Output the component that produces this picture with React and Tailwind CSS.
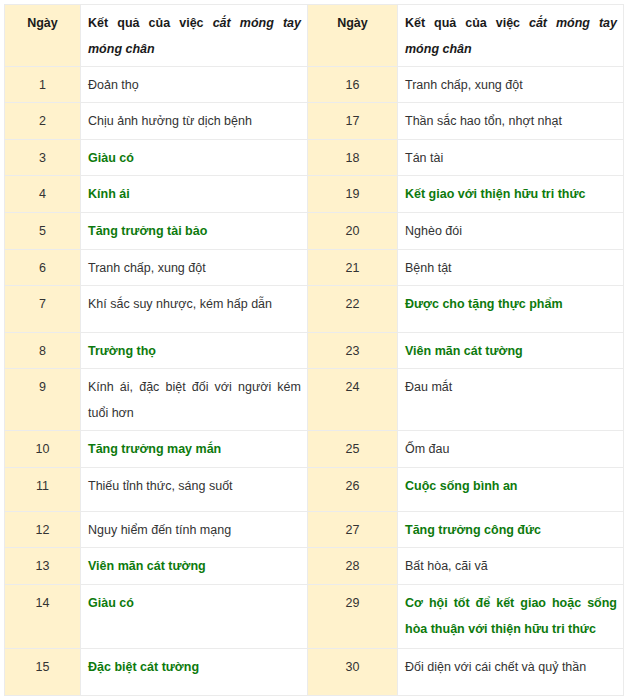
const rows = [
  { l: ['1', 'Đoản thọ', false], r: ['16', 'Tranh chấp, xung đột', false], h: 'h-[36px]' },
  { l: ['2', 'Chịu ảnh hưởng từ dịch bệnh', false], r: ['17', 'Thần sắc hao tổn, nhợt nhạt', false], h: 'h-[37px]' },
  { l: ['3', 'Giàu có', true], r: ['18', 'Tán tài', false], h: 'h-[36px]' },
  { l: ['4', 'Kính ái', true], r: ['19', 'Kết giao với thiện hữu tri thức', true], h: 'h-[37px]' },
  { l: ['5', 'Tăng trưởng tài bảo', true], r: ['20', 'Nghèo đói', false], h: 'h-[37px]' },
  { l: ['6', 'Tranh chấp, xung đột', false], r: ['21', 'Bệnh tật', false], h: 'h-[36px]' },
  { l: ['7', 'Khí sắc suy nhược, kém hấp dẫn', false], r: ['22', 'Được cho tặng thực phẩm', true], h: 'h-[47px]' },
  { l: ['8', 'Trường thọ', true], r: ['23', 'Viên mãn cát tường', true], h: 'h-[36px]' },
  { l: ['9', 'Kính ái, đặc biệt đối với người kém tuổi hơn', false], r: ['24', 'Đau mắt', false], h: 'h-[62px]' },
  { l: ['10', 'Tăng trưởng may mắn', true], r: ['25', 'Ốm đau', false], h: 'h-[37px]' },
  { l: ['11', 'Thiếu tỉnh thức, sáng suốt', false], r: ['26', 'Cuộc sống bình an', true], h: 'h-[44px]' },
  { l: ['12', 'Nguy hiểm đến tính mạng', false], r: ['27', 'Tăng trưởng công đức', true], h: 'h-[36px]' },
  { l: ['13', 'Viên mãn cát tường', true], r: ['28', 'Bất hòa, cãi vã', false], h: 'h-[37px]' },
  { l: ['14', 'Giàu có', true], r: ['29', 'Cơ hội tốt để kết giao hoặc sống hòa thuận với thiện hữu tri thức', true], h: 'h-[64px]' },
  { l: ['15', 'Đặc biệt cát tường', true], r: ['30', 'Đối diện với cái chết và quỷ thần', false], h: 'h-[47px]' },
];

const DayCell = ({ children }) => (
  <td className="bg-[#fff2cc] border border-[#ebebeb] text-center align-top px-2 pt-[5px] pb-[4px]">{children}</td>
);

const TextCell = ({ text, good }) => (
  <td className="bg-white border border-[#ebebeb] text-justify align-top pl-[7px] pr-[6px] pt-[5px] pb-[4px]">
    {good ? <strong className="font-bold text-[#0d7a0d]">{text}</strong> : text}
  </td>
);

const App = () => {
  return (
    <div className="bg-white pl-[4px] pt-[4px] w-[629px] h-[700px] overflow-hidden">
      <table
        className="table-fixed border-collapse w-[619px] text-[12.5px] leading-[26px] text-[#333333]"
        style={{ fontFamily: '"Liberation Sans", Arial, sans-serif' }}
      >
        <colgroup>
          <col className="w-[76px]" />
          <col className="w-[227px]" />
          <col className="w-[90px]" />
          <col className="w-[226px]" />
        </colgroup>
        <tbody>
          <tr className="h-[62px]">
            <td className="bg-[#fff2cc] border border-[#ebebeb] text-center align-top px-2 pt-[5px] pb-[4px] font-bold text-[#1a1a1a]">Ngày</td>
            <td className="bg-white border border-[#ebebeb] text-justify align-top pl-[7px] pr-[6px] pt-[5px] pb-[4px] font-bold text-[#1a1a1a]">
              Kết quả của việc <em>cắt móng tay móng chân</em>
            </td>
            <td className="bg-[#fff2cc] border border-[#ebebeb] text-center align-top px-2 pt-[5px] pb-[4px] font-bold text-[#1a1a1a]">Ngày</td>
            <td className="bg-white border border-[#ebebeb] text-justify align-top pl-[7px] pr-[6px] pt-[5px] pb-[4px] font-bold text-[#1a1a1a]">
              Kết quả của việc <em>cắt móng tay móng chân</em>
            </td>
          </tr>
          {rows.map((row) => (
            <tr key={row.l[0]} className={row.h}>
              <DayCell>{row.l[0]}</DayCell>
              <TextCell text={row.l[1]} good={row.l[2]} />
              <DayCell>{row.r[0]}</DayCell>
              <TextCell text={row.r[1]} good={row.r[2]} />
            </tr>
          ))}
        </tbody>
      </table>
    </div>
  );
};

export default App;
